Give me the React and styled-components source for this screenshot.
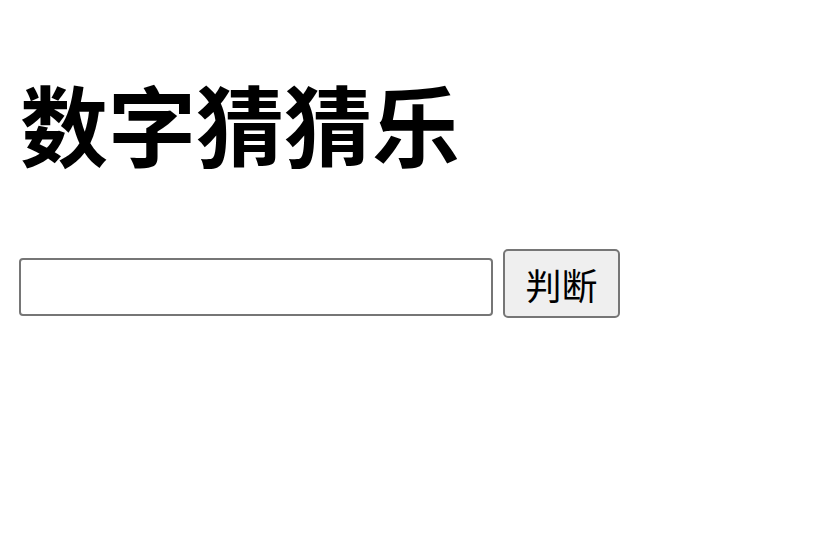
import React from 'react';
import styled, { createGlobalStyle } from 'styled-components';

const GlobalStyle = createGlobalStyle`
  html, body {
    margin: 0;
    padding: 0;
    background: #fff;
  }
  body {
    font-family: "Noto Sans CJK SC", "Noto Sans", sans-serif;
    color: #000;
  }
`;

const Page = styled.div`
  padding: 0 20px;
`;

const Title = styled.h1`
  margin: 78px 0 0 0;
  font-size: 88px;
  line-height: 1;
  font-weight: 700;
  height: 88px;
`;

const Form = styled.div`
  display: flex;
  align-items: flex-start;
  gap: 10px;
  margin-top: 83px;
  margin-left: -1px;
`;

const Input = styled.input`
  box-sizing: border-box;
  width: 474px;
  height: 58px;
  margin-top: 9px;
  border: 2px solid #767676;
  border-radius: 4px;
  background: #fff;
  font-size: 32px;
  padding: 0 8px;
  outline: none;
`;

const Button = styled.button`
  box-sizing: border-box;
  width: 117px;
  height: 69px;
  border: 2px solid #767676;
  border-radius: 5px;
  background: #efefef;
  font-family: "Noto Sans CJK SC", sans-serif;
  font-size: 36px;
  line-height: 1;
  color: #000;
  padding: 0;
  cursor: pointer;
`;

export default function App() {
  return (
    <Page>
      <GlobalStyle />
      <Title>数字猜猜乐</Title>
      <Form>
        <Input type="text" />
        <Button>判断</Button>
      </Form>
    </Page>
  );
}
